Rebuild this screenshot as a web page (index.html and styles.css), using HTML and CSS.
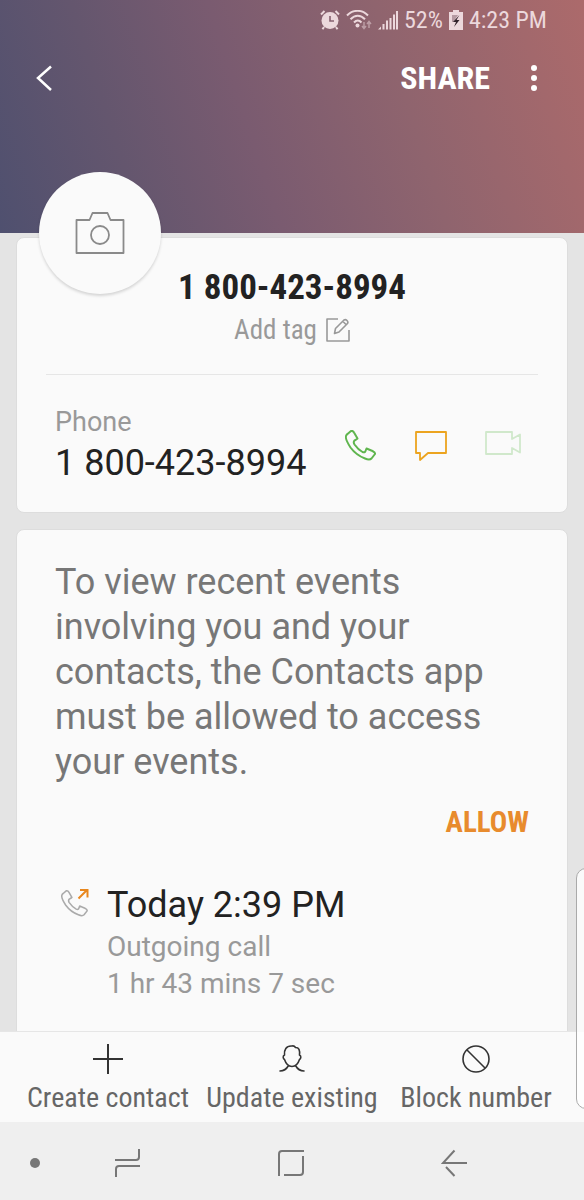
FILE: index.html
```
<!DOCTYPE html>
<html lang="en">

<head>
    <meta charset="UTF-8">
    <meta name="viewport" content="width=device-width, initial-scale=1.0">
    <title>Contact</title>
    <link rel="stylesheet" href="styles.css">
</head>

<body>
    <header class="header">
        <div class="status-bar">
            <svg width="20" height="20" viewBox="0 0 20 20">
                <circle cx="10" cy="10.5" r="8.500" fill="currentColor"/>
                <path d="M1 4.5 4.5 1M19 4.5 15.500 1M4 17 2.500 19.300M16 17 17.500 19.300" fill="none" stroke="currentColor" stroke-width="2"/>
                <path d="M10 6v5h4" fill="none" stroke="#85606f" stroke-width="1.600"/>
            </svg>
            <svg width="26" height="20" viewBox="0 0 26 20">
                <path d="M1 5.500C7-.7 16-.7 22 5.500M4.500 9.300C9 4.500 14.500 4.500 19 9.300M8 12.500C10.500 9.800 13 9.800 15.500 12.500" fill="none" stroke="currentColor" stroke-width="2"/>
                <circle cx="11.500" cy="15.500" r="2" fill="currentColor"/>
                <path d="M18 12v6M16 16l2 2.500 2-2.500M23 18v-6M21 14l2-2.500 2 2.500" fill="none" stroke="currentColor" stroke-width="1.500" opacity="0.5"/>
            </svg>
            <svg width="20" height="20" viewBox="0 0 20 20">
                <path d="M0 19.500 3 16.500v3z" fill="currentColor"/>
                <path d="M5.500 19.500v-5.500M9 19.500v-9M12.500 19.500V8M16 19.500V4.500M19 19.500V1" fill="none" stroke="currentColor" stroke-width="2"/>
            </svg>
            <span>52%</span>
            <svg width="14" height="20" viewBox="0 0 14 20">
                <path d="M4 0h6v2h4v18H0V2h4z" fill="currentColor"/>
                <path d="M3 5h6L4.500 12H3z" fill="#b59aa2"/>
                <path d="M10.500 5 4 12h3L5 17 10.500 10H7.500z" fill="#33242c"/>
            </svg>
            <span>4:23 PM</span>
        </div>
        <div class="toolbar">
            <button aria-label="Back">
                <svg width="18" height="28" viewBox="0 0 18 28"><path d="M15 2.500 2 14 15 26" fill="none" stroke="currentColor" stroke-width="2.500"/></svg>
            </button>
            <button class="share-button">SHARE</button>
            <button aria-label="More options">
                <svg width="8" height="28" viewBox="0 0 8 28" fill="currentColor"><circle cx="4" cy="4" r="3"/><circle cx="4" cy="14" r="3"/><circle cx="4" cy="24" r="3"/></svg>
            </button>
        </div>
        <button class="photo-button" aria-label="Add photo">
            <svg width="50" height="42" viewBox="0 0 50 42" fill="none" stroke="currentColor" stroke-width="1.800" stroke-linejoin="round">
                <path d="M1.500 8h13l3-7h15l3 7h13v33h-47z"/>
                <circle cx="25" cy="23" r="9"/>
            </svg>
        </button>
    </header>

    <main class="content">
        <section class="card">
            <div class="contact-title">
                <h1>1 800-423-8994</h1>
                <button class="tag-button">Add tag
                    <svg width="24" height="24" viewBox="0 0 24 24" fill="none" stroke="currentColor" stroke-width="1.600" stroke-linejoin="round">
                        <path d="M12 1H1v22h22V12"/>
                        <path d="M8.500 15.500 9.500 10.500 18 2Q19.500 1 21 2.500 22.500 4 21.500 5.500L13 14z M17 3.500l3.500 3.500"/>
                    </svg>
                </button>
            </div>
            <div class="phone-row">
                <div class="phone-info">
                    <div class="label">Phone</div>
                    <div class="number">1 800-423-8994</div>
                </div>
                <div class="actions">
                    <button class="call" aria-label="Call">
                        <svg width="32" height="32" viewBox="0 0 32 32" fill="none" stroke="currentColor" stroke-width="2" stroke-linejoin="round">
                            <path d="M2.500 4 6 1Q8 .5 9 2.500L12.500 8.500Q11.500 9.500 9.500 10.500 8 12 9.500 14.500 13 19.500 17.500 22Q20 23 20.500 21L21.500 18.500 27.500 21Q30.500 22.500 30 24L26.500 28.500Q24.500 30.500 20 28.500 11 25 5.500 17.500 0 9 1 6 1.500 4.500 2.500 4z"/>
                        </svg>
                    </button>
                    <button class="message" aria-label="Message">
                        <svg width="32" height="32" viewBox="0 0 32 32" fill="none" stroke="currentColor" stroke-width="1.800" stroke-linejoin="round">
                            <path d="M1 2h30v21H13l-8 7v-7H1z"/>
                        </svg>
                    </button>
                    <button class="video" aria-label="Video call">
                        <svg width="36" height="32" viewBox="0 0 36 32" fill="none" stroke="currentColor" stroke-width="1.800" stroke-linejoin="round">
                            <path d="M1 2h26v7l8-4.500v18L27 18v6H1z"/>
                        </svg>
                    </button>
                </div>
            </div>
        </section>

        <section class="card events">
            <p>To view recent events involving you and your contacts, the Contacts app must be allowed to access your events.</p>
            <button class="allow-button">ALLOW</button>
            <div class="call-entry">
                <svg width="30" height="30" viewBox="0 0 30 30" fill="none" stroke-linejoin="round">
                    <path transform="translate(0 2) scale(.87)" d="M2.500 4 6 1Q8 .5 9 2.500L12.500 8.500Q11.500 9.500 9.500 10.500 8 12 9.500 14.500 13 19.500 17.500 22Q20 23 20.500 21L21.500 18.500 27.500 21Q30.500 22.500 30 24L26.500 28.500Q24.500 30.500 20 28.500 11 25 5.500 17.500 0 9 1 6 1.500 4.500 2.500 4z" stroke="#aaa" stroke-width="1.800"/>
                    <path d="M17.500 10.500 26 2M19 2h7.500v7.500" stroke="#e8871e" stroke-width="2" stroke-linejoin="miter"/>
                </svg>
                <div>
                    <h2>Today 2:39 PM</h2>
                    <div class="detail">Outgoing call</div>
                    <div class="detail">1 hr 43 mins 7 sec</div>
                </div>
            </div>
        </section>
    </main>

    <footer class="bottom-bar">
        <button>
            <svg width="30" height="30" viewBox="0 0 30 30" fill="none" stroke="currentColor" stroke-width="2"><path d="M15 0v30M0 15h30"/></svg>
            Create contact
        </button>
        <button>
            <svg width="30" height="30" viewBox="0 0 30 30" fill="none" stroke="currentColor" stroke-width="1.600" stroke-linecap="round" stroke-linejoin="round">
                <path d="M15 2C9 1.500 7 6 7.500 11 5.500 12 6 14.500 7.500 15.500 9 20 12 22.500 15 22.500 18 22.500 21 20 22.500 15.500 24 14.500 24.500 12 22.500 11 23 6 22 3.500 18.500 3.500 17.500 2 16.500 1.500 15 2zM11.500 21.500Q8.500 27 3 27M18.500 21.500Q21.500 27 27 27"/>
            </svg>
            Update existing
        </button>
        <button>
            <svg width="30" height="30" viewBox="0 0 30 30" fill="none" stroke="currentColor" stroke-width="1.600"><circle cx="15" cy="15" r="13"/><path d="m6 6 18 18"/></svg>
            Block number
        </button>
    </footer>

    <nav class="system-nav">
        <button aria-label="Show navigation bar">
            <svg width="10" height="30" viewBox="0 0 10 30"><circle cx="5" cy="15" r="5" fill="currentColor"/></svg>
        </button>
        <div class="nav-keys">
            <button aria-label="Recent apps">
                <svg width="26" height="30" viewBox="0 0 26 30" fill="none" stroke="currentColor" stroke-width="2"><path d="M1 12h21q3 0 3-3V1M2 29v-8q0-3 3-3h21"/></svg>
            </button>
            <button aria-label="Home">
                <svg width="28" height="28" viewBox="0 0 28 28" fill="none" stroke="currentColor" stroke-width="2"><path d="M2 27V5q0-3 3-3h22M26 7v16q0 3-3 3H7"/></svg>
            </button>
            <button aria-label="Back">
                <svg width="26" height="28" viewBox="0 0 26 28" fill="none" stroke="currentColor" stroke-width="2"><path d="M26 14H2L13.500 1.500M5 18l8.500 9"/></svg>
            </button>
        </div>
    </nav>

    <div class="edge-handle"></div>
</body>

</html>
```
FILE: styles.css
```
* {
    box-sizing: border-box;
}

body {
    margin: 0;
    height: 100vh;
    display: flex;
    flex-direction: column;
    overflow: hidden;
    font-family: Roboto, sans-serif;
    background-color: #e4e4e4;
    color: #222;
}

h1,
h2,
p {
    margin: 0;
}

button {
    border: none;
    padding: 0;
    background: none;
    font-family: "Roboto Condensed", Roboto, sans-serif;
    color: inherit;
    cursor: pointer;
}

svg {
    display: block;
    flex: none;
}

.header {
    position: relative;
    flex: none;
    padding-bottom: 113px;
    background: linear-gradient(72deg, #4f506f 0%, #64566e 22%, #7a5b70 43%, #8f646e 68%, #ac6a6b 100%);
    color: #fff;
}

.status-bar {
    display: flex;
    justify-content: flex-end;
    align-items: center;
    gap: 6px;
    height: 40px;
    padding-right: 37px;
    font-family: "Roboto Condensed", Roboto, sans-serif;
    font-size: 24px;
    color: #ecd8dc;
}

.toolbar {
    display: flex;
    align-items: center;
    height: 80px;
    padding: 0 46px 4px 36px;
}

.share-button {
    margin-left: auto;
    margin-right: 40px;
    font-size: 32px;
    font-weight: 700;
}

.photo-button {
    position: absolute;
    left: 39px;
    bottom: -61px;
    width: 122px;
    height: 122px;
    display: flex;
    align-items: center;
    justify-content: center;
    border-radius: 50%;
    background-color: #fafafa;
    color: #8a8a8a;
    box-shadow: 0 2px 3px rgba(0, 0, 0, 0.15);
}

.content {
    flex: 1;
    min-height: 0;
    overflow: hidden;
    padding: 4px 16px 0;
}

.card {
    border: 1px solid #ddd;
    border-radius: 8px;
    background-color: #fafafa;
    margin-bottom: 16px;
}

.contact-title {
    display: flex;
    flex-direction: column;
    align-items: center;
    margin: 0 29px;
    padding: 28px 0 24px;
    border-bottom: 1px solid #e6e6e6;
}

.contact-title h1 {
    font-family: "Roboto Condensed", Roboto, sans-serif;
    font-size: 35px;
    line-height: 44px;
}

.tag-button {
    display: flex;
    align-items: center;
    gap: 9px;
    font-size: 27px;
    line-height: 40px;
    color: #999;
}

.phone-row {
    display: flex;
    align-items: center;
    justify-content: space-between;
    padding: 28px 46px 26px 38px;
}

.phone-info {
    white-space: nowrap;
}

.label {
    font-size: 27px;
    line-height: 38px;
    color: #999;
}

.number {
    font-size: 36px;
    line-height: 45px;
}

.actions {
    display: flex;
    gap: 38px;
    padding-top: 3px;
}

.call {
    color: #5fb54e;
}

.message {
    color: #eca41f;
}

.video {
    color: #d0e8cb;
}

.events {
    padding: 30px 38px 0;
}

.events p {
    font-size: 36px;
    line-height: 45px;
    color: #777;
}

.allow-button {
    display: block;
    margin: 19px 0 0 auto;
    font-size: 29px;
    line-height: 36px;
    font-weight: 700;
    color: #e88b2d;
}

.call-entry {
    display: flex;
    gap: 16px;
    padding: 42px 0 40px 6px;
}

.call-entry svg {
    margin-top: 6px;
}

.call-entry h2 {
    font-size: 36px;
    font-weight: 400;
    line-height: 46px;
}

.detail {
    font-size: 28px;
    line-height: 37px;
    color: #999;
}

.bottom-bar {
    flex: none;
    display: grid;
    grid-template-columns: repeat(3, 1fr);
    padding: 12px 16px 8px;
    border-top: 1px solid #e6e6e6;
    background-color: #fafafa;
}

.bottom-bar button {
    display: flex;
    flex-direction: column;
    align-items: center;
    gap: 8px;
    font-size: 28px;
    line-height: 32px;
    color: #666;
}

.bottom-bar svg {
    color: #333;
}

.system-nav {
    flex: none;
    display: flex;
    align-items: center;
    gap: 74px;
    height: 78px;
    padding: 4px 117px 0 30px;
    background-color: #efefef;
    color: #777;
}

.nav-keys {
    flex: 1;
    display: flex;
    justify-content: space-between;
    align-items: center;
}

.edge-handle {
    position: fixed;
    top: 868px;
    right: -12px;
    width: 20px;
    height: 241px;
    border: 1px solid #aaa;
    border-radius: 12px;
    background-color: rgba(255, 255, 255, 0.8);
}
```
